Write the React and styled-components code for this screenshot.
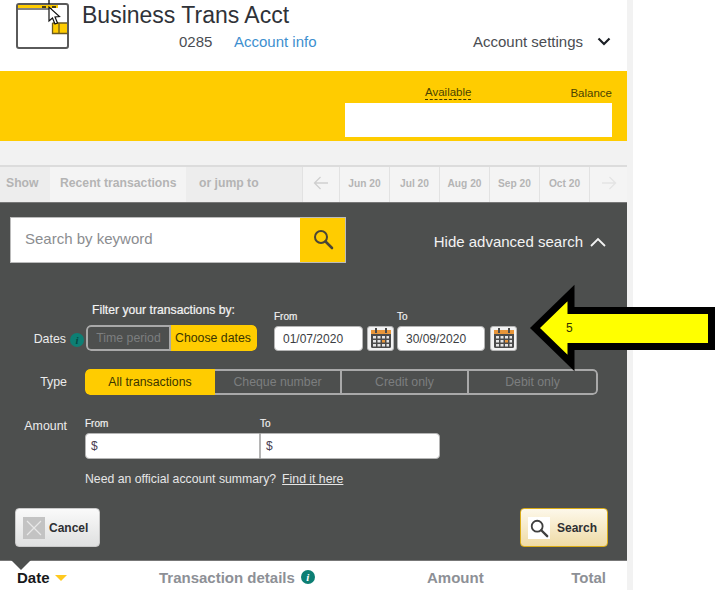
import React from "react";
import styled, { createGlobalStyle } from "styled-components";

const GlobalStyle = createGlobalStyle`
  html, body {
    margin: 0;
    padding: 0;
    background: #fff;
    font-family: "Liberation Sans", Arial, sans-serif;
  }
`;

const Page = styled.div`
  position: relative;
  width: 716px;
  height: 615px;
  overflow: hidden;
`;

const Column = styled.div`
  width: 627px;
  height: 590px;
  border-right: 6px solid #f2f2f2;
  display: flex;
  flex-direction: column;
`;

const Header = styled.header`
  height: 71px;
  display: flex;
  padding-left: 16px;
  box-sizing: border-box;
`;

const AccountLogo = styled.svg`
  width: 53px;
  height: 46px;
  margin-top: 3px;
  flex: none;
`;

const HeaderBody = styled.div`
  flex: 1;
  padding-left: 13px;
`;

const AccountName = styled.h1`
  margin: 0;
  padding-top: 2px;
  font-size: 23px;
  line-height: 26px;
  font-weight: 400;
  color: #2f3238;
`;

const HeaderRow = styled.div`
  display: flex;
  align-items: center;
  height: 20px;
  margin-top: 3px;
  padding: 0 16px 0 97px;
  font-size: 15px;
  color: #4a4d52;
`;

const AccountNumber = styled.span`
  width: 55px;
`;

const InfoLink = styled.a`
  color: #3d8fcf;
`;

const SettingsLink = styled.span`
  margin-left: auto;
  display: flex;
  align-items: center;
  gap: 14px;
`;

const BalanceBand = styled.section`
  height: 70px;
  background: #ffcc00;
  box-sizing: border-box;
  padding: 15px 15px 4px 345px;
  display: flex;
  flex-direction: column;
`;

const BalanceLabels = styled.div`
  height: 17px;
  display: flex;
  padding-left: 80px;
  justify-content: space-between;
  font-size: 11.5px;
  color: #4a4300;
`;

const AvailableLabel = styled.span`
  height: 13px;
  line-height: 13px;
  border-bottom: 1px dashed #3c3600;
`;

const BalanceLabel = styled.span`
  line-height: 14px;
`;

const BalanceBox = styled.div`
  flex: 1;
  background: #fff;
`;

const Spacer = styled.div`
  height: 24px;
  background: #f2f2f2;
`;

const TabBar = styled.nav`
  height: 37px;
  display: flex;
  box-sizing: border-box;
  border-top: 2px solid #dcdcdc;
  background: #f4f4f4;
  font-size: 12.2px;
  font-weight: 700;
  color: #b4b4b4;
`;

const TabLabel = styled.div`
  width: ${(p) => p.$width}px;
  display: flex;
  align-items: center;
  padding: 0 0 3px ${(p) => p.$pad}px;
  box-sizing: border-box;
  background: ${(p) => (p.$shade ? "#ededed" : "#f4f4f4")};
`;

const MonthCell = styled.div`
  width: ${(p) => p.$width || 50}px;
  display: flex;
  align-items: center;
  justify-content: center;
  padding-bottom: 3px;
  box-sizing: border-box;
  border-left: 1px solid #e2e2e2;
  font-size: 10.2px;
`;

const SearchPanel = styled.section`
  position: relative;
  height: 359px;
  box-sizing: border-box;
  background: #4d4f4e;
  border-top: 1px solid #777;
  border-bottom: 1px solid #777;
  padding-top: 14px;
  color: #eee;
`;

const KeywordRow = styled.div`
  display: flex;
  align-items: center;
  justify-content: space-between;
  padding: 0 21px 0 10px;
`;

const KeywordBox = styled.div`
  width: 336px;
  height: 46px;
  box-sizing: border-box;
  border: 1px solid #bbb;
  background: #fff;
  display: flex;
  align-items: center;
  padding-left: 14px;
  font-size: 15px;
  color: #8b8d90;
`;

const KeywordHint = styled.span`
  margin-bottom: 4px;
`;

const KeywordButton = styled.div`
  margin-left: auto;
  width: 45px;
  height: 100%;
  padding-bottom: 3px;
  box-sizing: border-box;
  background: #ffcc00;
  display: flex;
  align-items: center;
  justify-content: center;
`;

const HideToggle = styled.div`
  display: flex;
  align-items: center;
  gap: 7px;
  margin-top: 3px;
  font-size: 15px;
  color: #f3f3f3;
`;

const FormRow = styled.div`
  display: flex;
  align-items: ${(p) => p.$align || "center"};
  margin-top: ${(p) => p.$top || 0}px;
`;

const RowLabel = styled.div`
  width: ${(p) => p.$width || 67}px;
  margin-right: ${(p) => p.$gap ?? 18}px;
  margin-bottom: ${(p) => p.$lift || 0}px;
  padding-top: ${(p) => p.$drop || 0}px;
  text-align: right;
  font-size: 12.4px;
  color: #ececec;
`;

const InfoDot = styled.span`
  width: 14px;
  height: 14px;
  margin-bottom: ${(p) => p.$lift || 0}px;
  border-radius: 50%;
  background: ${(p) => p.$bg || "#0d7f74"};
  color: ${(p) => p.$fg || "#054a44"};
  display: inline-flex;
  align-items: center;
  justify-content: center;
  flex: none;
  font: italic 700 11px "Liberation Serif", serif;
`;

const FilterGroup = styled.div`
  display: flex;
  flex-direction: column;
  margin-left: 2px;
`;

const FilterHeading = styled.div`
  margin: 0 0 7px 6px;
  height: 15px;
  line-height: 15px;
  font-size: 12.2px;
  color: #f3f3f3;
  -webkit-text-stroke: 0.2px #f3f3f3;
`;

const Segments = styled.div`
  width: ${(p) => p.$width}px;
  height: 26px;
  display: flex;
  border-radius: 5px;
  overflow: hidden;
  flex: none;
`;

const Segment = styled.div`
  flex: ${(p) => (p.$width ? `0 0 ${p.$width}px` : 1)};
  display: flex;
  align-items: center;
  justify-content: center;
  box-sizing: border-box;
  font-size: 12.3px;
  border: 2px solid ${(p) => (p.$active ? "#ffcc00" : "#a9a9a9")};
  background: ${(p) => (p.$active ? "#ffcc00" : "transparent")};
  color: ${(p) => (p.$active ? "#3a3500" : "#7c7e7f")};
  &:first-child {
    border-radius: 5px 0 0 5px;
  }
  &:last-child {
    border-radius: 0 5px 5px 0;
  }
  & + & {
    border-left: 0;
  }
`;

const InputField = styled.div`
  display: flex;
  flex-direction: column;
  margin-left: ${(p) => p.$left || 0}px;
`;

const TinyLabel = styled.label`
  height: 16px;
  line-height: 14px;
  font-size: 10px;
  color: #f0f0f0;
  -webkit-text-stroke: 0.2px #f0f0f0;
`;

const DateInput = styled.div`
  width: ${(p) => p.$width}px;
  height: 25px;
  box-sizing: border-box;
  background: #fff;
  border: 1px solid #b5b5b5;
  border-radius: 4px;
  display: flex;
  align-items: center;
  padding-left: 8px;
  font-size: 12px;
  color: #3b3d42;
`;

const CalendarButton = styled.div`
  width: 27px;
  height: 25px;
  margin-left: ${(p) => p.$left}px;
  box-sizing: border-box;
  background: #f3f3f3;
  border: 1px solid #b5b5b5;
  border-radius: 3px;
  display: flex;
  align-items: center;
  justify-content: center;
`;

const AmountInput = styled.div`
  width: ${(p) => p.$width}px;
  height: 26px;
  box-sizing: border-box;
  background: #fff;
  border: 1px solid #b5b5b5;
  border-radius: ${(p) => p.$radius};
  display: flex;
  align-items: center;
  padding-left: 5px;
  font-size: 12px;
  color: #4a4050;
`;

const SummaryLine = styled.p`
  margin: 12px 0 0 85px;
  height: 16px;
  line-height: 16px;
  font-size: 12.25px;
  color: #e6e6e6;
`;

const SummaryLink = styled.a`
  margin-left: 6px;
  color: #e6e6e6;
  text-decoration: underline;
`;

const ActionRow = styled.div`
  display: flex;
  justify-content: space-between;
  margin-top: 21px;
  padding: 0 19px 0 15px;
`;

const ActionButton = styled.div`
  width: ${(p) => p.$width}px;
  height: 39px;
  box-sizing: border-box;
  border-radius: 4px;
  border: 1px solid ${(p) => (p.$primary ? "#d9ab16" : "#c9c9c9")};
  background: ${(p) =>
    p.$primary
      ? "linear-gradient(#fdf8ea, #efdba6)"
      : "linear-gradient(#fafafa, #dfe0e0)"};
  display: flex;
  align-items: center;
  padding-left: 7px;
  gap: ${(p) => (p.$primary ? 7 : 4)}px;
  font-size: 12px;
  font-weight: 700;
  color: #2e2f33;
`;

const ButtonIcon = styled.div`
  width: 22px;
  height: 22px;
  background: ${(p) => (p.$primary ? "#fff" : "#c3c3c3")};
  display: flex;
  align-items: center;
  justify-content: center;
`;

const PanelNotch = styled.div`
  position: absolute;
  left: 11px;
  bottom: -10px;
  width: 0;
  height: 0;
  border-left: 10px solid transparent;
  border-right: 10px solid transparent;
  border-top: 10px solid #4d4f4e;
`;

const TableHeader = styled.div`
  flex: 1;
  display: flex;
  align-items: center;
  padding: 3px 21px 0 17px;
  font-size: 15px;
  font-weight: 700;
  color: #8d9096;
`;

const DateHeading = styled.div`
  width: 142px;
  display: flex;
  align-items: center;
  gap: 5px;
  color: #17181a;
`;

const SortMark = styled.span`
  width: 0;
  height: 0;
  margin-top: 1px;
  border-left: 6px solid transparent;
  border-right: 6px solid transparent;
  border-top: 6px solid #ffc91f;
`;

const DetailsHeading = styled.div`
  width: 268px;
  display: flex;
  align-items: center;
  gap: 6px;
`;

const AmountHeading = styled.div`
  margin-right: auto;
`;

const Overlay = styled.svg`
  position: absolute;
  left: ${(p) => p.$x}px;
  top: ${(p) => p.$y}px;
`;

const ArrowNumber = styled.span`
  position: absolute;
  left: 566px;
  top: 321px;
  font-size: 12px;
  color: #333300;
`;

const MagnifierIcon = ({ size = 22, color = "#4a4536" }) => (
  <svg width={size} height={size} viewBox="0 0 22 22" fill="none">
    <circle cx="9" cy="9" r="6" stroke={color} strokeWidth="2" />
    <path d="M13.5 13.5 20 20" stroke={color} strokeWidth="2.6" strokeLinecap="round" />
  </svg>
);

const CalendarIcon = () => (
  <svg width="22" height="21" viewBox="0 0 22 21">
    <rect x="1" y="2" width="20" height="18" rx="1.5" fill="#4b4b4b" />
    <rect x="1" y="2" width="20" height="4" fill="#e8963a" />
    <rect x="5" y="0" width="2" height="5" fill="#4b4b4b" />
    <rect x="15" y="0" width="2" height="5" fill="#4b4b4b" />
    <path
      d="M3 8h3v2.5H3zM7.5 8h3v2.5h-3zM12 8h3v2.5h-3zM16.5 8H19v2.5h-2.5zM3 12h3v2.5H3zM7.5 12h3v2.5h-3zM16.5 12H19v2.5h-2.5zM3 16h3v2.5H3zM7.5 16h3v2.5h-3zM12 16h3v2.5h-3zM16.5 16H19v2.5h-2.5z"
      fill="#e6e6e6"
    />
    <rect x="12" y="12" width="3" height="2.5" fill="#e8963a" />
  </svg>
);

const months = ["Jun 20", "Jul 20", "Aug 20", "Sep 20", "Oct 20"];
const types = [
  { label: "All transactions", width: 129, active: true },
  { label: "Cheque number", width: 127 },
  { label: "Credit only", width: 127 },
  { label: "Debit only" },
];

const App = () => {
  return (
    <Page>
      <GlobalStyle />
      <Column>
        <Header>
          <AccountLogo viewBox="0 0 53 46">
            <rect x="1" y="1" width="51" height="44" rx="2" fill="#fff" stroke="#5a5a5a" strokeWidth="2" />
            <rect x="2" y="2" width="40" height="3" fill="#ffcc00" />
            <path d="M2 6h34" stroke="#5a5a5a" strokeWidth="1.5" />
            <rect x="37" y="20" width="14" height="10" fill="#ffcc00" />
            <path d="M36.5 20v10.5H52M36.5 20H51M43 20v10" stroke="#6b5a20" strokeWidth="1.3" fill="none" />
          </AccountLogo>
          <HeaderBody>
            <AccountName>Business Trans Acct</AccountName>
            <HeaderRow>
              <AccountNumber>0285</AccountNumber>
              <InfoLink>Account info</InfoLink>
              <SettingsLink>
                Account settings
                <svg width="14" height="9" viewBox="0 0 14 9" fill="none">
                  <path d="M1.5 1.5 7 7l5.5-5.5" stroke="#1c2026" strokeWidth="2.2" />
                </svg>
              </SettingsLink>
            </HeaderRow>
          </HeaderBody>
        </Header>

        <BalanceBand>
          <BalanceLabels>
            <AvailableLabel>Available</AvailableLabel>
            <BalanceLabel>Balance</BalanceLabel>
          </BalanceLabels>
          <BalanceBox />
        </BalanceBand>

        <Spacer />

        <TabBar>
          <TabLabel $width={50} $pad={6} $shade>Show</TabLabel>
          <TabLabel $width={136} $pad={10}>Recent transactions</TabLabel>
          <TabLabel $width={116} $pad={13} $shade>or jump to</TabLabel>
          <MonthCell $width={37}>
            <svg width="16" height="14" viewBox="0 0 16 14" fill="none">
              <path d="M15 7H1.5M7.5 1l-6 6 6 6" stroke="#cfcfcf" strokeWidth="1.3" />
            </svg>
          </MonthCell>
          {months.map((m) => (
            <MonthCell key={m}>{m}</MonthCell>
          ))}
          <MonthCell $width={38}>
            <svg width="16" height="14" viewBox="0 0 16 14" fill="none">
              <path d="M1 7h13.5M8.5 1l6 6-6 6" stroke="#e4e4e4" strokeWidth="1.3" />
            </svg>
          </MonthCell>
        </TabBar>

        <SearchPanel>
          <KeywordRow>
            <KeywordBox>
              <KeywordHint>Search by keyword</KeywordHint>
              <KeywordButton>
                <MagnifierIcon />
              </KeywordButton>
            </KeywordBox>
            <HideToggle>
              Hide advanced search
              <svg width="16" height="10" viewBox="0 0 16 10" fill="none">
                <path d="M1 9l7-7 7 7" stroke="#f3f3f3" strokeWidth="1.8" />
              </svg>
            </HideToggle>
          </KeywordRow>

          <FormRow $top={40} $align="flex-end">
            <RowLabel $width={66} $gap={4} $lift={5}>Dates</RowLabel>
            <InfoDot $lift={4}>i</InfoDot>
            <FilterGroup>
              <FilterHeading>Filter your transactions by:</FilterHeading>
              <Segments $width={171}>
                <Segment $width={85}>Time period</Segment>
                <Segment $active>Choose dates</Segment>
              </Segments>
            </FilterGroup>
            <InputField $left={17}>
              <TinyLabel>From</TinyLabel>
              <DateInput $width={89}>01/07/2020</DateInput>
            </InputField>
            <CalendarButton $left={4}>
              <CalendarIcon />
            </CalendarButton>
            <InputField $left={3}>
              <TinyLabel>To</TinyLabel>
              <DateInput $width={88}>30/09/2020</DateInput>
            </InputField>
            <CalendarButton $left={5}>
              <CalendarIcon />
            </CalendarButton>
          </FormRow>

          <FormRow $top={18}>
            <RowLabel>Type</RowLabel>
            <Segments $width={513}>
              {types.map((t) => (
                <Segment key={t.label} $width={t.width + (t.active ? 1 : 0)} $active={t.active}>
                  {t.label}
                </Segment>
              ))}
            </Segments>
          </FormRow>

          <FormRow $top={22} $align="flex-start">
            <RowLabel $drop={2}>Amount</RowLabel>
            <InputField>
              <TinyLabel>From</TinyLabel>
              <AmountInput $width={175} $radius="4px 0 0 4px">$</AmountInput>
            </InputField>
            <InputField>
              <TinyLabel>To</TinyLabel>
              <AmountInput $width={180} $radius="0 4px 4px 0">$</AmountInput>
            </InputField>
          </FormRow>

          <SummaryLine>
            Need an official account summary?
            <SummaryLink>Find it here</SummaryLink>
          </SummaryLine>

          <ActionRow>
            <ActionButton $width={85}>
              <ButtonIcon>
                <svg width="16" height="16" viewBox="0 0 16 16" fill="none">
                  <path d="M1 1l14 14M15 1 1 15" stroke="#e8e8e8" strokeWidth="1.2" />
                </svg>
              </ButtonIcon>
              Cancel
            </ActionButton>
            <ActionButton $width={88} $primary>
              <ButtonIcon $primary>
                <MagnifierIcon size={20} color="#3f3f3f" />
              </ButtonIcon>
              Search
            </ActionButton>
          </ActionRow>

          <PanelNotch />
        </SearchPanel>

        <TableHeader>
          <DateHeading>
            Date
            <SortMark />
          </DateHeading>
          <DetailsHeading>
            Transaction details
            <InfoDot $fg="#fff">i</InfoDot>
          </DetailsHeading>
          <AmountHeading>Amount</AmountHeading>
          <div>Total</div>
        </TableHeader>
      </Column>

      {/* annotations drawn over the screenshot */}
      <Overlay $x={42} $y={0} width="20" height="26" viewBox="0 0 20 26">
        <path d="M7 7v14l3.5-3 2.5 6 2.500-1-2.500-6 4.500-.5z" fill="#fff" stroke="#111" strokeWidth="1.2" />
        <path d="M7 0v4M0 7h4M10 7h4" stroke="#111" strokeWidth="1.3" />
      </Overlay>
      <Overlay $x={528} $y={283} width="188" height="90" viewBox="0 0 188 90">
        <path
          d="M7 45 43 10v17.5h140.500v36H43V80z"
          fill="#ffff00"
          stroke="#000"
          strokeWidth="7"
          strokeLinejoin="miter"
        />
      </Overlay>
      <ArrowNumber>5</ArrowNumber>
    </Page>
  );
};

export default App;
